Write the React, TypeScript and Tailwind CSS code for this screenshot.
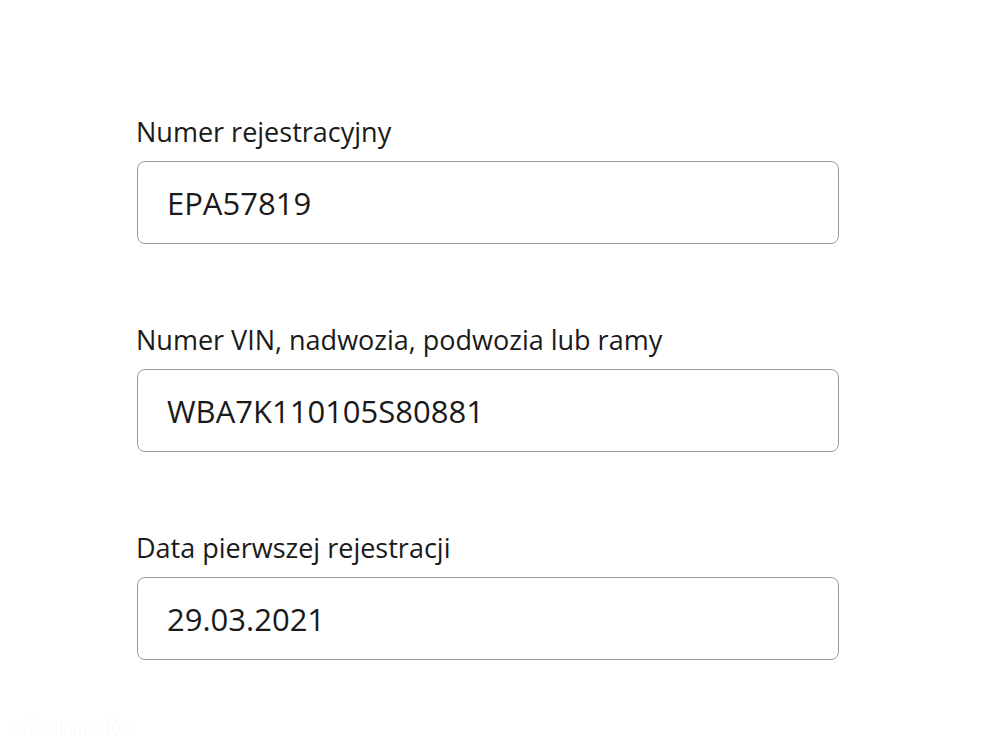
export default function App() {
  const fields = [
    { label: "Numer rejestracyjny", value: "EPA57819" },
    { label: "Numer VIN, nadwozia, podwozia lub ramy", value: "WBA7K110105S80881" },
    { label: "Data pierwszej rejestracji", value: "29.03.2021" },
  ];

  return (
    <div
      className="relative w-[1000px] h-[750px] bg-white overflow-hidden text-[#1a1a1a]"
      style={{ fontFamily: '"Open Sans", "Noto Sans", sans-serif' }}
    >
      <div className="flex flex-col gap-[78px] pl-[137px] pt-[114px]">
        {fields.map((f) => (
          <div key={f.label} className="flex flex-col gap-[11px]">
            <label className="text-[27px] leading-[36px] -ml-[1px]">{f.label}</label>
            <div className="w-[702px] h-[83px] flex items-center pl-[29px] rounded-[8px] border-[1.5px] border-[#9a9a9a] text-[31px] leading-[40px]">
              {f.value}
            </div>
          </div>
        ))}
      </div>

      {/* watermark */}
      <div className="absolute left-[10px] top-[708px] text-[28px] leading-[34px] font-bold text-white tracking-wide [text-shadow:0_0_1px_#e6e6e6]">
        otomoto
      </div>
    </div>
  );
}
